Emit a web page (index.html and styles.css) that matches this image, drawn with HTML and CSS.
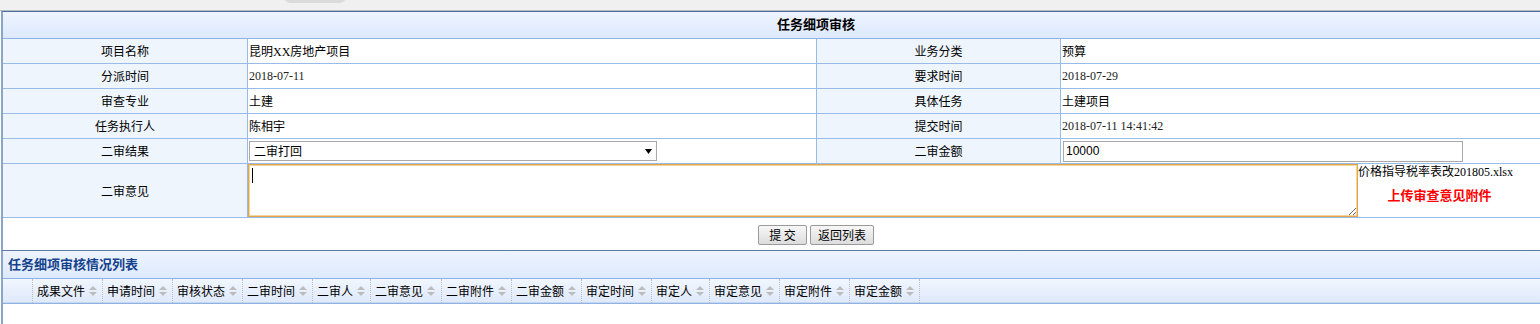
FILE: index.html
```html
<!DOCTYPE html>
<html lang="zh-CN">
<head>
<meta charset="utf-8">
<title>任务细项审核</title>
<link rel="stylesheet" href="styles.css">
</head>
<body>
<div class="topbar"><div class="tab"></div></div>

<div class="panel form-panel">
  <div class="panel-title">任务细项审核</div>
  <div class="form-grid">
    <div class="cell lbl">项目名称</div>
    <div class="cell val">昆明XX房地产项目</div>
    <div class="cell lbl">业务分类</div>
    <div class="cell val">预算</div>

    <div class="cell lbl">分派时间</div>
    <div class="cell val date">2018-07-11</div>
    <div class="cell lbl">要求时间</div>
    <div class="cell val date">2018-07-29</div>

    <div class="cell lbl">审查专业</div>
    <div class="cell val">土建</div>
    <div class="cell lbl">具体任务</div>
    <div class="cell val">土建项目</div>

    <div class="cell lbl">任务执行人</div>
    <div class="cell val">陈相宇</div>
    <div class="cell lbl">提交时间</div>
    <div class="cell val date">2018-07-11 14:41:42</div>

    <div class="cell lbl">二审结果</div>
    <div class="cell val">
      <span class="select-wrap">
        <select class="select"><option>二审打回</option></select>
        <svg class="select-arrow" viewBox="0 0 7 5" width="7" height="5"><path d="M0 0H7L3.5 5Z"/></svg>
      </span>
    </div>
    <div class="cell lbl">二审金额</div>
    <div class="cell val"><input class="amount" type="text" value="10000"></div>

    <div class="cell lbl">二审意见</div>
    <div class="cell val opinion">
      <span class="ta-wrap"><textarea class="ta"></textarea><span class="caret"></span></span>
      <div class="attach">
        <span class="fname">价格指导税率表改201805.xlsx</span>
        <span class="upload">上传审查意见附件</span>
      </div>
    </div>
  </div>
  <div class="actions">
    <button class="btn btn-submit">提 交</button>
    <button class="btn btn-back">返回列表</button>
  </div>
</div>

<div class="panel list-panel">
  <div class="list-title">任务细项审核情况列表</div>
  <div class="list-head">
    <div class="hcol idx"></div>
    <div class="hcol w70">成果文件<svg class="sort" viewBox="0 0 8 10" width="8" height="10"><path d="M0 4L4 0L8 4Z M0 6H8L4 10Z"/></svg></div>
    <div class="hcol w70">申请时间<svg class="sort" viewBox="0 0 8 10" width="8" height="10"><path d="M0 4L4 0L8 4Z M0 6H8L4 10Z"/></svg></div>
    <div class="hcol w70">审核状态<svg class="sort" viewBox="0 0 8 10" width="8" height="10"><path d="M0 4L4 0L8 4Z M0 6H8L4 10Z"/></svg></div>
    <div class="hcol w70">二审时间<svg class="sort" viewBox="0 0 8 10" width="8" height="10"><path d="M0 4L4 0L8 4Z M0 6H8L4 10Z"/></svg></div>
    <div class="hcol w58">二审人<svg class="sort" viewBox="0 0 8 10" width="8" height="10"><path d="M0 4L4 0L8 4Z M0 6H8L4 10Z"/></svg></div>
    <div class="hcol w71">二审意见<svg class="sort" viewBox="0 0 8 10" width="8" height="10"><path d="M0 4L4 0L8 4Z M0 6H8L4 10Z"/></svg></div>
    <div class="hcol w70">二审附件<svg class="sort" viewBox="0 0 8 10" width="8" height="10"><path d="M0 4L4 0L8 4Z M0 6H8L4 10Z"/></svg></div>
    <div class="hcol w70">二审金额<svg class="sort" viewBox="0 0 8 10" width="8" height="10"><path d="M0 4L4 0L8 4Z M0 6H8L4 10Z"/></svg></div>
    <div class="hcol w70">审定时间<svg class="sort" viewBox="0 0 8 10" width="8" height="10"><path d="M0 4L4 0L8 4Z M0 6H8L4 10Z"/></svg></div>
    <div class="hcol w58">审定人<svg class="sort" viewBox="0 0 8 10" width="8" height="10"><path d="M0 4L4 0L8 4Z M0 6H8L4 10Z"/></svg></div>
    <div class="hcol w70">审定意见<svg class="sort" viewBox="0 0 8 10" width="8" height="10"><path d="M0 4L4 0L8 4Z M0 6H8L4 10Z"/></svg></div>
    <div class="hcol w70">审定附件<svg class="sort" viewBox="0 0 8 10" width="8" height="10"><path d="M0 4L4 0L8 4Z M0 6H8L4 10Z"/></svg></div>
    <div class="hcol w70">审定金额<svg class="sort" viewBox="0 0 8 10" width="8" height="10"><path d="M0 4L4 0L8 4Z M0 6H8L4 10Z"/></svg></div>
  </div>
  <div class="list-body"></div>
</div>
</body>
</html>
```

FILE: styles.css
```css
html, body {
  margin: 0;
  padding: 0;
  width: 1540px;
  height: 324px;
  overflow: hidden;
  background: #fff;
}
body {
  font-family: "Liberation Serif", "Noto Sans CJK SC", serif;
  font-size: 12px;
  color: #000;
}

.topbar {
  height: 10px;
  background: #f0f0f0;
  border-bottom: 1px solid #b3bcc7;
  overflow: hidden;
}
.tab {
  margin-left: 283px;
  margin-top: -13px;
  width: 64px;
  height: 16px;
  background: #dbdbdb;
  border-radius: 8px;
}

.panel {
  margin-left: 1px;
  border-left: 2px solid #8ba5c7;
}
.form-panel {
  border-top: 1px solid #4f6f98;
}
.panel-title {
  height: 26px;
  line-height: 26px;
  padding-left: 89px;
  text-align: center;
  font-weight: bold;
  font-size: 13px;
  background: linear-gradient(#eef4ff, #dde9fc);
  border-bottom: 1px solid #8db2e3;
}

.form-grid {
  display: grid;
  grid-template-columns: 245px 569px 244px minmax(0, 1fr);
  grid-template-rows: repeat(5, 25px) 54px;
}
.cell {
  box-sizing: border-box;
  display: flex;
  align-items: center;
  border-right: 1px solid #99bbe8;
  border-bottom: 1px solid #99bbe8;
  white-space: nowrap;
  overflow: hidden;
}
.form-grid .cell:nth-child(4n) {
  border-right: none;
}
.lbl {
  justify-content: center;
  background: #eef5fd;
}
.val {
  padding-left: 1px;
  background: #fff;
}
.date {
  color: #222;
}

.select-wrap {
  position: relative;
  display: block;
}
.select {
  display: block;
  appearance: none;
  -webkit-appearance: none;
  box-sizing: border-box;
  width: 408px;
  height: 20px;
  margin: 0;
  padding: 0 0 0 4px;
  border: 1px solid #a9a9a9;
  border-radius: 0;
  background: #fff;
  color: #000;
  font-family: "Noto Sans CJK SC", sans-serif;
  font-size: 12px;
  line-height: 18px;
}
.select-arrow {
  position: absolute;
  right: 5px;
  top: 8px;
  fill: #000;
}

.amount {
  box-sizing: border-box;
  width: 400px;
  height: 21px;
  margin: 0 0 0 1px;
  padding: 0 2px;
  border: 1px solid #a9a9a9;
  background: #fff;
  color: #000;
  font-family: "Liberation Sans", sans-serif;
  font-size: 12px;
}

.opinion {
  grid-column: span 3;
  padding-left: 0;
  align-items: flex-start;
  border-right: none;
}
.ta-wrap {
  position: relative;
  display: block;
  flex: none;
}
.ta {
  display: block;
  box-sizing: border-box;
  width: 1110px;
  height: 53px;
  margin: 0;
  padding: 3px;
  border: 1px solid #e1a54f;
  box-shadow: inset 0 0 0 1px #f3d49a;
  outline: none;
  background: #fff;
  font-size: 12px;
}
.caret {
  position: absolute;
  left: 4px;
  top: 4px;
  width: 1px;
  height: 15px;
  background: #000;
}
.attach {
  display: flex;
  flex-direction: column;
  align-items: center;
  flex: none;
}
.fname {
  line-height: 16px;
}
.upload {
  margin-top: 7px;
  padding-left: 8px;
  line-height: 16px;
  color: #ff0000;
  font-weight: bold;
  font-size: 13px;
  font-family: "Noto Sans CJK SC", sans-serif;
}

.actions {
  height: 32px;
  display: flex;
  justify-content: center;
  align-items: center;
  gap: 3px;
  padding-top: 1px;
  padding-left: 89px;
  box-sizing: border-box;
}
.btn {
  box-sizing: border-box;
  height: 20px;
  margin: 0;
  padding: 0;
  border: 1px solid #9a9a9a;
  border-radius: 2px;
  background: linear-gradient(#f7f7f7, #dcdcdc);
  color: #000;
  font-family: "Noto Sans CJK SC", sans-serif;
  font-size: 12px;
  line-height: 18px;
}
.btn-submit { width: 49px; }
.btn-back { width: 64px; }

.list-panel {
  border-top: 1px solid #5b7ba4;
}
.list-title {
  height: 27px;
  line-height: 27px;
  padding-left: 5px;
  font-weight: bold;
  font-size: 13px;
  color: #15428b;
  background: linear-gradient(#eef4ff, #dde9fc);
  border-bottom: 1px solid #8db2e3;
}
.list-head {
  display: flex;
  height: 24px;
  background: linear-gradient(#f1f6fe, #dfe9fb);
  border-bottom: 1px solid #8db2e3;
  box-shadow: inset 0 -1px 0 #c6d7ee;
}
.hcol {
  box-sizing: border-box;
  display: flex;
  align-items: center;
  gap: 4px;
  padding: 0 5px 0 4px;
  border-right: 1px dotted #bdbdbd;
  white-space: nowrap;
}
.idx { width: 30px; }
.w70 { width: 70px; }
.w71 { width: 71px; }
.w58 { width: 58px; }
.sort {
  flex: none;
  fill: #bcbcbc;
}
.list-body {
  height: 30px;
}
```
